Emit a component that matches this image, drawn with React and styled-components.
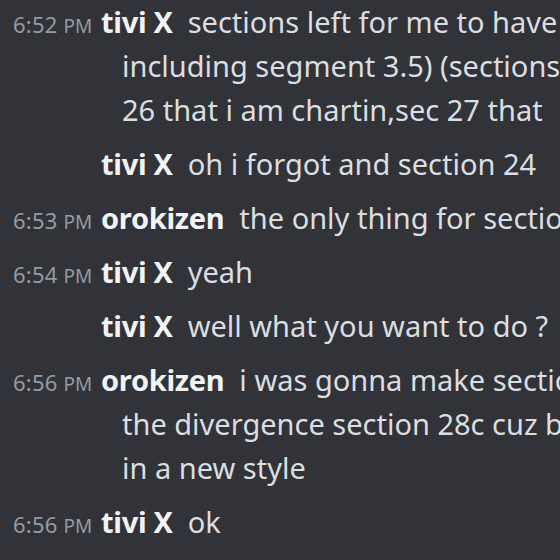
import React from "react";
import styled, { createGlobalStyle } from "styled-components";

const GlobalStyle = createGlobalStyle`
  html, body {
    margin: 0;
    padding: 0;
    background: #313338;
  }
  body {
    width: 560px;
    height: 560px;
    overflow: hidden;
    font-family: "Noto Sans", "Open Sans", sans-serif;
  }
`;

const Chat = styled.div`
  margin-top: -5px;
  width: 560px;
  overflow: hidden;
`;

const Message = styled.div`
  padding: 5px 0 5px 122px;
  text-indent: -109px;
  white-space: nowrap;
  line-height: 44px;
  font-size: 29px;
  color: #dbdee1;
`;

const Stamp = styled.span`
  display: inline-block;
  width: 88px;
  line-height: 20px;
  text-indent: 0;
  font-size: 22px;
  color: #949ba4;
  letter-spacing: 0.2px;
`;

const Meridiem = styled.span`
  font-size: 19px;
`;

const Name = styled.span`
  font-weight: 700;
  color: #f2f3f5;
  margin-right: 15px;
  letter-spacing: -0.3px;
`;

const messages = [
  {
    time: "6:52",
    name: "tivi X",
    lines: [
      "sections left for me to have",
      "including segment 3.5) (sections",
      "26 that i am chartin,sec 27 that",
    ],
  },
  { name: "tivi X", lines: ["oh i forgot and section 24"] },
  { time: "6:53", name: "orokizen", lines: ["the only thing for section"] },
  { time: "6:54", name: "tivi X", lines: ["yeah"] },
  { name: "tivi X", lines: ["well what you want to do ?"] },
  {
    time: "6:56",
    name: "orokizen",
    lines: [
      "i was gonna make section",
      "the divergence section 28c cuz b",
      "in a new style",
    ],
  },
  { time: "6:56", name: "tivi X", lines: ["ok"] },
];

export default function App() {
  return (
    <>
      <GlobalStyle />
      <Chat>
        {messages.map((m, i) => (
          <Message key={i}>
            <Stamp>
              {m.time && (
                <>
                  {m.time} <Meridiem>PM</Meridiem>
                </>
              )}
            </Stamp>
            <Name>{m.name}</Name>
            {m.lines.map((line, j) => (
              <React.Fragment key={j}>
                {j > 0 && <br />}
                {line}
              </React.Fragment>
            ))}
          </Message>
        ))}
      </Chat>
    </>
  );
}
